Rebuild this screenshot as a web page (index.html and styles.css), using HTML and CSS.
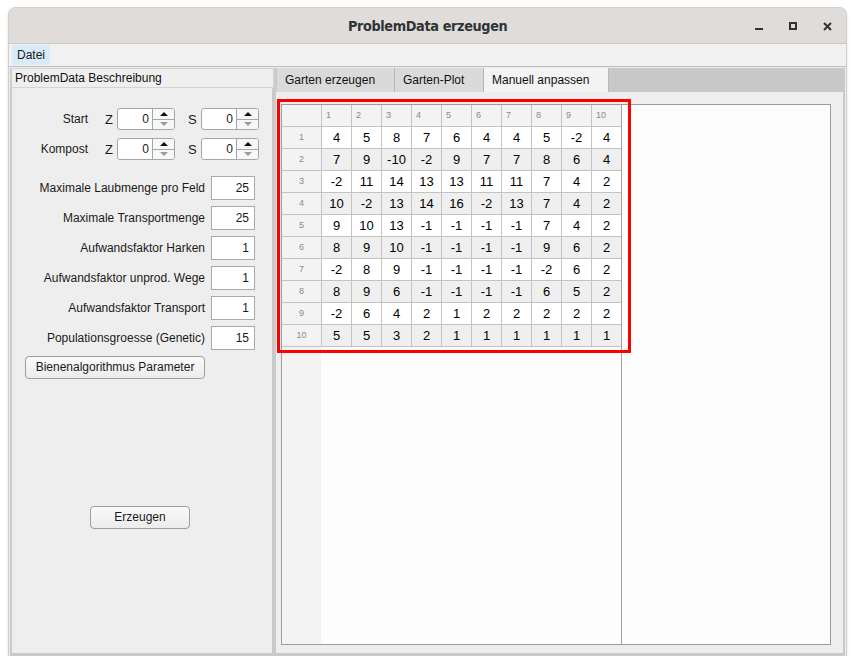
FILE: index.html
```html
<!DOCTYPE html>
<html>
<head>
<meta charset="utf-8">
<title>ProblemData erzeugen</title>
<link rel="stylesheet" href="styles.css">
</head>
<body>
<div class="window">
  <div class="titlebar">
    <div class="title">ProblemData erzeugen</div>
    <div class="controls">
      <span class="ctl ctl-min"></span>
      <span class="ctl ctl-max"></span>
      <svg class="ctl-close" width="9" height="9" viewBox="0 0 9 9"><path d="M1 1 L8 8 M8 1 L1 8" stroke="#2e3436" stroke-width="2"/></svg>
    </div>
  </div>
  <div class="menubar"><span class="menu-item">Datei</span></div>
  <div class="main">
    <div class="left">
      <div class="left-head">ProblemData Beschreibung</div>
      <div class="left-body">
        <div class="spin-row">
          <span class="spin-lbl">Start</span>
          <span class="axis axis-z">Z</span>
          <div class="spin"><span class="spin-val">0</span><span class="spin-btns"><span class="up"><i class="tri-up"></i></span><span class="down"><i class="tri-down"></i></span></span></div>
          <span class="axis axis-s">S</span>
          <div class="spin"><span class="spin-val">0</span><span class="spin-btns"><span class="up"><i class="tri-up"></i></span><span class="down"><i class="tri-down"></i></span></span></div>
        </div>
        <div class="spin-row">
          <span class="spin-lbl">Kompost</span>
          <span class="axis axis-z">Z</span>
          <div class="spin"><span class="spin-val">0</span><span class="spin-btns"><span class="up"><i class="tri-up"></i></span><span class="down"><i class="tri-down"></i></span></span></div>
          <span class="axis axis-s">S</span>
          <div class="spin"><span class="spin-val">0</span><span class="spin-btns"><span class="up"><i class="tri-up"></i></span><span class="down"><i class="tri-down"></i></span></span></div>
        </div>
        <div class="fields">
          <div class="field"><span class="field-lbl">Maximale Laubmenge pro Feld</span><span class="field-in">25</span></div>
          <div class="field"><span class="field-lbl">Maximale Transportmenge</span><span class="field-in">25</span></div>
          <div class="field"><span class="field-lbl">Aufwandsfaktor Harken</span><span class="field-in">1</span></div>
          <div class="field"><span class="field-lbl">Aufwandsfaktor unprod. Wege</span><span class="field-in">1</span></div>
          <div class="field"><span class="field-lbl">Aufwandsfaktor Transport</span><span class="field-in">1</span></div>
          <div class="field"><span class="field-lbl">Populationsgroesse (Genetic)</span><span class="field-in">15</span></div>
        </div>
        <div class="btn btn-bienen">Bienenalgorithmus Parameter</div>
        <div class="btn btn-erzeugen">Erzeugen</div>
      </div>
    </div>
    <div class="right">
      <div class="tabs">
        <div class="tab tab-1">Garten erzeugen</div>
        <div class="tab tab-2">Garten-Plot</div>
        <div class="tab tab-3 active">Manuell anpassen</div>
      </div>
      <div class="tab-content">
        <div class="box">
          <div class="sheet">
            <div class="grid" id="grid"></div>
          </div>
          <div class="rest"></div>
        </div>
        <div class="highlight"></div>
      </div>
    </div>
  </div>
</div>
<script src="script.js"></script>
</body>
</html>
```

FILE: script.js
```js
(function () {
  var data = [
    [4, 5, 8, 7, 6, 4, 4, 5, -2, 4],
    [7, 9, -10, -2, 9, 7, 7, 8, 6, 4],
    [-2, 11, 14, 13, 13, 11, 11, 7, 4, 2],
    [10, -2, 13, 14, 16, -2, 13, 7, 4, 2],
    [9, 10, 13, -1, -1, -1, -1, 7, 4, 2],
    [8, 9, 10, -1, -1, -1, -1, 9, 6, 2],
    [-2, 8, 9, -1, -1, -1, -1, -2, 6, 2],
    [8, 9, 6, -1, -1, -1, -1, 6, 5, 2],
    [-2, 6, 4, 2, 1, 2, 2, 2, 2, 2],
    [5, 5, 3, 2, 1, 1, 1, 1, 1, 1]
  ];
  var g = document.getElementById('grid');
  var html = '<div class="corner"></div>';
  for (var c = 1; c <= 10; c++) html += '<div class="colhead">' + c + '</div>';
  for (var r = 0; r < data.length; r++) {
    var cls = (r % 2 === 1) ? ' alt' : '';
    html += '<div class="rowhead">' + (r + 1) + '</div>';
    for (var k = 0; k < data[r].length; k++) {
      html += '<div class="cell' + cls + '">' + data[r][k] + '</div>';
    }
  }
  g.innerHTML = html;
})();
```

FILE: styles.css
```css
html, body {
  margin: 0;
  padding: 0;
  background: #ffffff;
}
body {
  font-family: "Liberation Sans", Arial, sans-serif;
  font-size: 12px;
  color: #1a1a1a;
}
.window {
  margin: 8px 0 0 9px;
  width: 837px;
  height: 648px;
  background: #ececec;
  border-radius: 7px 7px 0 0;
  box-shadow: 0 0 0 1px #cfcfcf, 0 1px 4px rgba(0,0,0,0.18);
  display: flex;
  flex-direction: column;
  overflow: hidden;
}
.titlebar {
  height: 36px;
  flex: none;
  background: #dfdcd9;
  border-bottom: 1px solid #cdc9c5;
  box-sizing: border-box;
  position: relative;
  display: flex;
  align-items: center;
  justify-content: center;
}
.title {
  font-family: "DejaVu Sans", sans-serif;
  font-weight: bold;
  font-size: 14px;
  letter-spacing: -0.4px;
  color: #2e3436;
  transform: scaleX(0.92);
}
.controls {
  position: absolute;
  right: 14px;
  top: 0;
  height: 36px;
  display: flex;
  align-items: center;
  gap: 26px;
}
.ctl-min {
  width: 8px;
  height: 2px;
  background: #2e3436;
  margin-top: 6px;
}
.ctl-max {
  width: 4px;
  height: 4px;
  border: 2px solid #2e3436;
}
.ctl-close {
  display: block;
}
.menubar {
  height: 23px;
  flex: none;
  background: #f1f1f1;
  border-bottom: 1px solid #bdbdbd;
  box-sizing: border-box;
  display: flex;
  align-items: stretch;
  padding: 1px 0 1px 3px;
}
.menu-item {
  background: #d9ebf9;
  padding: 0 5px;
  display: flex;
  align-items: center;
  font-size: 12px;
  color: #1a1a1a;
}
.main {
  flex: 1;
  display: flex;
  padding: 1px 1px 0 1px;
  min-height: 0;
}
.left {
  width: 264px;
  box-sizing: border-box;
  display: flex;
  flex-direction: column;
  flex: none;
}
.left-head {
  height: 20px;
  box-sizing: border-box;
  background: #efefef;
  border: 1px solid #d4d4d4;
  border-left: 2px solid #cfcfcf;
  padding-left: 3px;
  line-height: 18px;
  font-size: 12px;
  color: #111;
}
.left-body {
  flex: 1;
  background: #eeeeee;
  border-left: 2px solid #c9c9c9;
  border-right: 2px solid #c9c9c9;
  border-bottom: 3px solid #c9c9c9;
  display: flex;
  flex-direction: column;
  padding-top: 20px;
}
.spin-row {
  display: flex;
  align-items: center;
  height: 22px;
  margin-bottom: 8px;
}
.spin-lbl {
  width: 76px;
  text-align: right;
}
.axis {
  width: 12px;
  font-size: 13px;
}
.axis-z {
  margin-left: 17px;
}
.axis-s {
  margin-left: 13px;
  width: 13px;
}
.spin {
  width: 58px;
  height: 22px;
  box-sizing: border-box;
  border: 1px solid #a6a6a6;
  border-radius: 3px;
  display: flex;
  background: #ffffff;
  overflow: hidden;
}
.spin-val {
  flex: 1;
  text-align: right;
  padding-right: 3px;
  line-height: 20px;
  font-size: 12px;
}
.spin-btns {
  width: 21px;
  border-left: 1px solid #a6a6a6;
  background: #f7f7f7;
  display: flex;
  flex-direction: column;
}
.spin-btns .up,
.spin-btns .down {
  flex: 1;
  display: flex;
  align-items: center;
  justify-content: center;
}
.spin-btns .up {
  border-bottom: 1px solid #a6a6a6;
}
.tri-up {
  width: 0;
  height: 0;
  border-left: 4px solid transparent;
  border-right: 4px solid transparent;
  border-bottom: 4px solid #111;
}
.tri-down {
  width: 0;
  height: 0;
  border-left: 4px solid transparent;
  border-right: 4px solid transparent;
  border-top: 4px solid #9a9a9a;
}
.fields {
  margin-top: 8px;
  display: flex;
  flex-direction: column;
  gap: 6px;
}
.field {
  display: flex;
  align-items: center;
  height: 24px;
}
.field-lbl {
  width: 199px;
  text-align: right;
  padding-right: 6px;
  box-sizing: border-box;
}
.field-in {
  width: 44px;
  height: 24px;
  box-sizing: border-box;
  background: #ffffff;
  border: 1px solid #a9a9a9;
  text-align: right;
  padding-right: 5px;
  line-height: 22px;
}
.btn {
  height: 23px;
  box-sizing: border-box;
  border: 1px solid #9e9e9e;
  border-radius: 4px;
  background: linear-gradient(#fafafa, #ececec);
  text-align: center;
  line-height: 21px;
  font-size: 12px;
}
.btn-bienen {
  width: 180px;
  margin: 6px 0 0 13px;
}
.btn-erzeugen {
  width: 100px;
  margin: 127px 0 0 78px;
}
.right {
  flex: 1;
  display: flex;
  flex-direction: column;
  border-left: 2px solid #cbcbcb;
  border-right: 2px solid #c9c9c9;
  border-bottom: 3px solid #c9c9c9;
  min-width: 0;
}
.tabs {
  height: 24px;
  flex: none;
  background: #c8c8c8;
  display: flex;
  padding-left: 1px;
}
.tab {
  box-sizing: border-box;
  background: #dadada;
  border-right: 1px solid #b8b8b8;
  padding-left: 8px;
  line-height: 24px;
  font-size: 12px;
  color: #111;
}
.tab-1 { width: 118px; }
.tab-2 { width: 89px; }
.tab-3 { width: 125px; }
.tab.active {
  background: #f3f3f3;
}
.tab-content {
  flex: 1;
  position: relative;
  background: #eeeeee;
  padding: 12px 12px 8px 5px;
  display: flex;
  min-height: 0;
}
.box {
  flex: 1;
  border: 1px solid #9c9c9c;
  background: #fdfdfd;
  display: flex;
}
.sheet {
  width: 339px;
  flex: none;
  border-right: 1px solid #a2a2a2;
  background: linear-gradient(to right, #f3f3f3 39px, #fdfdfd 39px);
}
.rest {
  flex: 1;
  background: #fdfdfd;
}
.grid {
  display: grid;
  grid-template-columns: 39px repeat(10, 29px);
  grid-template-rows: 21px repeat(10, 21px);
  gap: 1px;
  background: #c3c3c3;
  border-bottom: 1px solid #c3c3c3;
}
.corner,
.colhead,
.rowhead {
  background: #f3f3f3;
  color: #8a8a8a;
  font-size: 9px;
}
.colhead {
  padding-left: 4px;
  line-height: 21px;
}
.rowhead {
  text-align: center;
  line-height: 21px;
}
.cell {
  background: #ffffff;
  text-align: center;
  line-height: 21px;
  font-size: 13px;
  color: #000;
}
.cell.alt {
  background: #efefef;
}
.highlight {
  position: absolute;
  left: 1px;
  top: 7px;
  width: 348px;
  height: 248px;
  border: 3px solid #ff0000;
  pointer-events: none;
}
```
